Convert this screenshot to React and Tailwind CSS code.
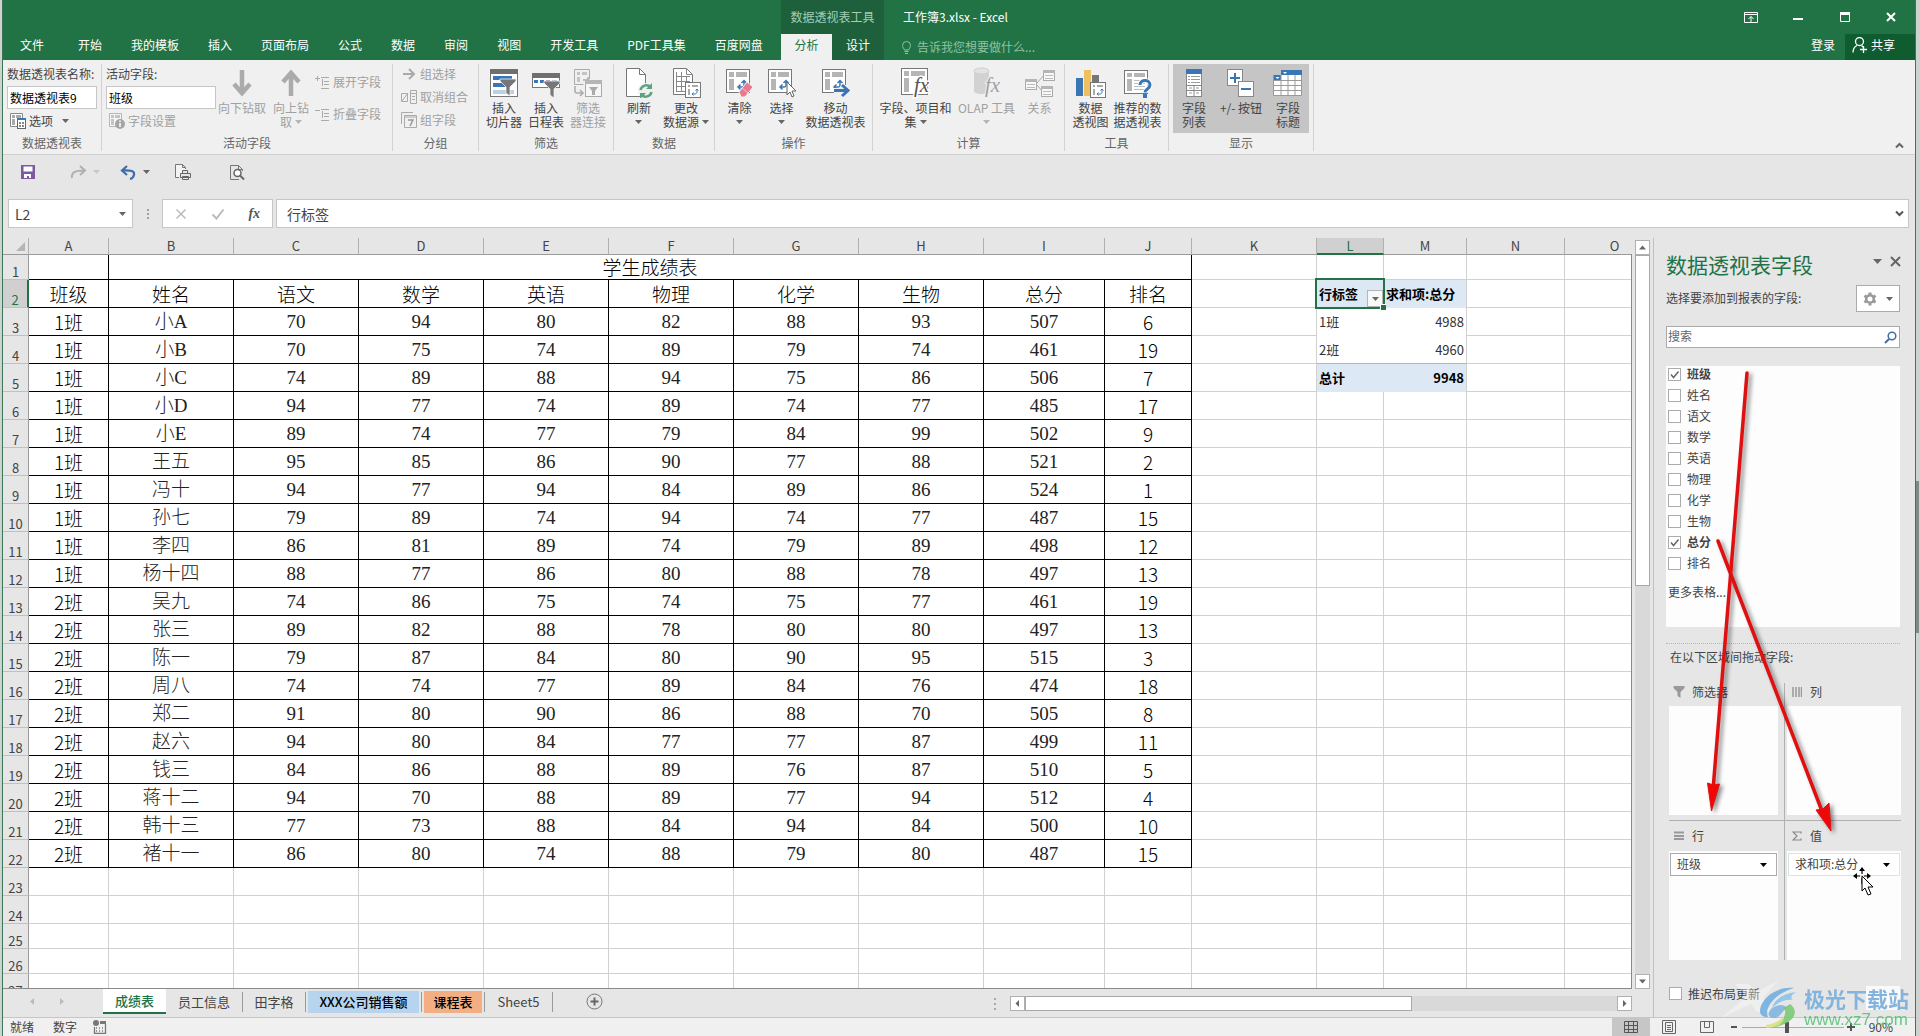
const tabs = ['开始', '我的模板', '插入', '页面布局', '公式', '数据', '审阅', '视图', '开发工具', 'PDF工具集', '百度网盘']

const headers = ['班级', '姓名', '语文', '数学', '英语', '物理', '化学', '生物', '总分', '排名']

const students = [
  ['1班', '小A', 70, 94, 80, 82, 88, 93, 507, 6],
  ['1班', '小B', 70, 75, 74, 89, 79, 74, 461, 19],
  ['1班', '小C', 74, 89, 88, 94, 75, 86, 506, 7],
  ['1班', '小D', 94, 77, 74, 89, 74, 77, 485, 17],
  ['1班', '小E', 89, 74, 77, 79, 84, 99, 502, 9],
  ['1班', '王五', 95, 85, 86, 90, 77, 88, 521, 2],
  ['1班', '冯十', 94, 77, 94, 84, 89, 86, 524, 1],
  ['1班', '孙七', 79, 89, 74, 94, 74, 77, 487, 15],
  ['1班', '李四', 86, 81, 89, 74, 79, 89, 498, 12],
  ['1班', '杨十四', 88, 77, 86, 80, 88, 78, 497, 13],
  ['2班', '吴九', 74, 86, 75, 74, 75, 77, 461, 19],
  ['2班', '张三', 89, 82, 88, 78, 80, 80, 497, 13],
  ['2班', '陈一', 79, 87, 84, 80, 90, 95, 515, 3],
  ['2班', '周八', 74, 74, 77, 89, 84, 76, 474, 18],
  ['2班', '郑二', 91, 80, 90, 86, 88, 70, 505, 8],
  ['2班', '赵六', 94, 80, 84, 77, 77, 87, 499, 11],
  ['2班', '钱三', 84, 86, 88, 89, 76, 87, 510, 5],
  ['2班', '蒋十二', 94, 70, 88, 89, 77, 94, 512, 4],
  ['2班', '韩十三', 77, 73, 88, 84, 94, 84, 500, 10],
  ['2班', '褚十一', 86, 80, 74, 88, 79, 80, 487, 15],
]

const columns = [
  ['A', 'w-[80px]'], ['B', 'w-[125px]'], ['C', 'w-[125px]'], ['D', 'w-[125px]'], ['E', 'w-[125px]'],
  ['F', 'w-[125px]'], ['G', 'w-[125px]'], ['H', 'w-[125px]'], ['I', 'w-[121px]'], ['J', 'w-[87px]'],
  ['K', 'w-[125px]'], ['L', 'w-[67px]'], ['M', 'w-[83px]'], ['N', 'w-[98px]'], ['O', 'w-[100px]'],
]

const fields = [
  ['班级', true], ['姓名', false], ['语文', false], ['数学', false], ['英语', false],
  ['物理', false], ['化学', false], ['生物', false], ['总分', true], ['排名', false],
]

function Caret({ className = 'text-[#666]' }) {
  return (
    <svg width="7" height="4" viewBox="0 0 7 4" className={`shrink-0 ${className}`} aria-hidden="true">
      <path d="M0 0h7L3.500 4z" fill="currentColor" />
    </svg>
  )
}

/* ---------- ribbon icons ---------- */

function Svg({ size = 30, box = 30, children }) {
  return (
    <svg width={size} height={size} viewBox={`0 0 ${box} ${box}`} fill="none" aria-hidden="true" className="shrink-0">
      {children}
    </svg>
  )
}

function PivotSheet({ x = 1, y = 1 }) {
  return (
    <g transform={`translate(${x} ${y})`}>
      <rect x="0.500" y="0.500" width="23" height="23" fill="#fff" stroke="#777" />
      <rect x="3" y="3" width="5" height="5" fill="#b5b5b5" />
      <rect x="10" y="3" width="11" height="5" fill="#b5b5b5" />
      <rect x="3" y="10" width="5" height="11" fill="#b5b5b5" />
      <path d="M12 18h4c2 0 2-1 2-3v-3M14.500 15.500L12 18l2.500 2.500M15.500 14L18 11.500l2.500 2.500" stroke="#3a76b5" strokeWidth="1.500" />
    </g>
  )
}

function PivotBadge({ x, y }) {
  return (
    <g transform={`translate(${x} ${y})`}>
      <rect x="0.500" y="0.500" width="15" height="15" fill="#fff" stroke="#777" />
      <path d="M3 3h2v2H3zM7 3h6v2H7zM3 7h2v6H3z" fill="#aaa" />
      <path d="M7 12h3c1 0 2-1 2-2V7M8.500 10.500L7 12l1.500 1.500M10.500 8.500L12 7l1.500 1.500" stroke="#3a76b5" />
    </g>
  )
}

const Funnel = ({ x, y, color = '#777' }) => (
  <path transform={`translate(${x} ${y})`} d="M0 0h16v2l-6 6v9l-4-3V8L0 2z" fill={color} stroke="#f0f0f0" strokeWidth="0.800" />
)

const SlicerIcon = () => (
  <Svg>
    <rect x="1.500" y="1.500" width="27" height="27" fill="#fff" stroke="#777" />
    <rect x="1" y="1" width="28" height="5" fill="#6f6f6f" />
    <rect x="4" y="8" width="19" height="4" fill="#3a76b5" />
    <rect x="4" y="15" width="13" height="4" fill="#3a76b5" />
    <rect x="4" y="22" width="21" height="4" fill="#bcd0e5" />
    <Funnel x="11" y="11" />
  </Svg>
)

const TimelineIcon = () => (
  <Svg>
    <rect x="1.500" y="5.500" width="27" height="14" fill="#fff" stroke="#777" />
    <rect x="1" y="5" width="28" height="5" fill="#6f6f6f" />
    <path d="M3 12h4v3H3zM9 12h4v3H9z" fill="#3a76b5" />
    <path d="M15 12h4v3h-4z" fill="#a8708e" />
    <path d="M21 12h5v3h-5z" fill="#9ab8d8" />
    <Funnel x="13" y="13" />
  </Svg>
)

const FilterLinkIcon = () => (
  <Svg>
    <path d="M1.500 1.500h15v10M1.500 1.500v15h9" stroke="#aaa" />
    <path d="M4 4h3v3H4zM9 4h5v3H9zM4 9h3v5H4z" fill="#c4c4c4" />
    <path d="M10 12h5V9M2 18v5q0 2 2 2h6M7 22l3 3-3 3" stroke="#aaa" strokeWidth="1.500" />
    <rect x="12.500" y="12.500" width="16" height="16" fill="#f6f6f6" stroke="#aaa" />
    <rect x="12" y="12" width="17" height="4" fill="#b5b5b5" />
    <path d="M16 19h9l-3 4v4h-3v-4z" fill="#aaa" />
  </Svg>
)

const RefreshIcon = () => (
  <Svg>
    <path d="M2.500 0.500h13l6 6v22h-19z" fill="#fff" stroke="#777" />
    <path d="M15.500 0.500v6h6" stroke="#777" />
    <circle cx="22" cy="23" r="8" fill="#f0f0f0" />
    <path d="M16.500 22a6 6 0 0 1 10-3M27.500 24a6 6 0 0 1-10 3" stroke="#5aa37f" strokeWidth="2.500" />
    <path d="M28 15v6h-6zM16 31v-6h6z" fill="#5aa37f" />
  </Svg>
)

const ChangeSourceIcon = () => (
  <Svg>
    <path d="M2.500 0.500h13l6 6v20h-19z" fill="#fff" stroke="#777" />
    <path d="M15.500 0.500v6h6M5 8.500h14M5 13.500h14M5 18.500h14M5 23.500h14M5.500 4v20M10.500 4v20M15.500 8v16" stroke="#888" />
    <PivotBadge x="14" y="14" />
  </Svg>
)

const ClearIcon = () => (
  <Svg>
    <PivotSheet x="1" y="1" />
    <path d="M14 24L22 14l6 5-8 10h-4z" fill="#e8798f" stroke="#f0f0f0" />
    <path d="M17 20l6 5" stroke="#f7c3cd" />
  </Svg>
)

const SelectIcon = () => (
  <Svg>
    <PivotSheet x="1" y="1" />
    <path d="M20 14v13l3-3 2 5 2-1-2-5h4z" fill="#fff" stroke="#666" />
  </Svg>
)

const MoveIcon = () => (
  <Svg>
    <PivotSheet x="1" y="1" />
    <path d="M13 22.500h14M21 17l6 5.500-6 5.500" stroke="#f0f0f0" strokeWidth="5" />
    <path d="M13 22.500h14M21 17l6 5.500-6 5.500" stroke="#3a76b5" strokeWidth="3" />
  </Svg>
)

const FieldItemsIcon = () => (
  <Svg size={32} box={32}>
    <rect x="1.500" y="1.500" width="26" height="26" fill="#fff" stroke="#777" />
    <path d="M4 4h5v5H4zM11 4h14v5H11zM4 11h5v14H4z" fill="#b5b5b5" />
    <text x="14" y="25" fontSize="21" fontStyle="italic" fontFamily="Liberation Serif, serif" fill="#555" stroke="#fff" strokeWidth="3" paintOrder="stroke">fx</text>
  </Svg>
)

const OlapIcon = () => (
  <Svg size={32} box={32}>
    <path d="M3 4v20c0 4 15 4 15 0V4z" fill="#d2d2d2" />
    <ellipse cx="10.500" cy="4" rx="7.500" ry="3" fill="#e3e3e3" stroke="#cfcfcf" />
    <text x="14" y="25" fontSize="21" fontStyle="italic" fontFamily="Liberation Serif, serif" fill="#a0a0a0" stroke="#f0f0f0" strokeWidth="2" paintOrder="stroke">fx</text>
  </Svg>
)

const RelationIcon = () => (
  <Svg>
    <path d="M12 15l7-8M12 17l6 7" stroke="#aaa" />
    {[[0, 11], [18, 2], [16, 18]].map(([x, y]) => (
      <g key={x} transform={`translate(${x} ${y})`}>
        <rect x="0.500" y="0.500" width="11" height="10" fill="#f8f8f8" stroke="#aaa" />
        <path d="M0 0h12v3H0z" fill="#b5b5b5" />
        <path d="M2 5.500h8M2 8.500h8" stroke="#bbb" />
      </g>
    ))}
  </Svg>
)

const ChartIcon = () => (
  <Svg>
    <rect x="0" y="10" width="7" height="18" fill="#3a76b5" />
    <rect x="8" y="2" width="7" height="26" fill="#f0bf62" />
    <rect x="16" y="7" width="7" height="10" fill="#777" />
    <PivotBadge x="14" y="14" />
  </Svg>
)

const RecommendIcon = () => (
  <Svg>
    <rect x="1.500" y="2.500" width="23" height="23" fill="#fff" stroke="#777" />
    <path d="M4 5h5v4H4zM11 5h11v4H11zM4 11h5v12H4z" fill="#b5b5b5" />
    <path d="M11 12.500h11M11 15.500h11M11 18.500h11M11 21.500h11" stroke="#bbb" />
    <path d="M17 17c0-6 10-6 10 0 0 4-5 4-5 8" stroke="#fff" strokeWidth="5" />
    <path d="M17 17c0-6 10-6 10 0 0 4-5 4-5 7.500" stroke="#3a76b5" strokeWidth="3" />
    <rect x="20" y="26" width="4" height="4" fill="#3a76b5" />
  </Svg>
)

const FieldListIcon = () => (
  <Svg>
    <rect x="7.500" y="1.500" width="15" height="27" fill="#fff" stroke="#888" />
    <rect x="7" y="1" width="16" height="5" fill="#3a76b5" />
    <path d="M9 8.500h2M12 8.500h9M9 11.500h2M12 11.500h9M9 14.500h2M12 14.500h9" stroke="#999" />
    <path d="M8 17.500h14M8 22.500h14M15 17v11" stroke="#888" />
    <path d="M10 20h3M17 20h3M10 25h3M17 25h3" stroke="#999" />
  </Svg>
)

const PlusMinusIcon = () => (
  <Svg>
    <rect x="1.500" y="1.500" width="15" height="16" fill="#fff" stroke="#888" />
    <path d="M9 5v10M4 10h10" stroke="#3a76b5" strokeWidth="2" />
    <rect x="12.500" y="13.500" width="15" height="15" fill="#fff" stroke="#888" />
    <path d="M15 21h10" stroke="#3a76b5" strokeWidth="2" />
  </Svg>
)

const FieldHeaderIcon = () => (
  <Svg>
    <path d="M8 2h21v5H8zM1 7h7v5H1z" fill="#3a76b5" />
    <path d="M8 7h21v20H1V12h7z" fill="#fff" />
    <path d="M0.500 7v20.500h28V7M1 12.500h28M1 17.500h28M1 22.500h28M8 7v20M15 7v20M22 7v20" stroke="#999" />
    <path d="M10 4h4l-2 2zM2.500 9h4l-2 2z" fill="#fff" />
  </Svg>
)

const DrillIcon = ({ up }) => (
  <Svg>
    <path d={up ? 'M15 28V5M7 14L15 5l8 9' : 'M15 2v23M7 16l8 9 8-9'} stroke="#ababab" strokeWidth="4.500" />
  </Svg>
)

const TreeIcon = ({ plus }) => (
  <Svg size={15} box={15}>
    <path d="M0 3.500h5" stroke="#aaa" />
    {plus && <path d="M2.500 1v5" stroke="#aaa" />}
    <path d="M6 2.500h8M9 6.500h5M9 9.500h5M6 13.500h8M7.500 4v7" stroke="#aaa" />
  </Svg>
)

const OptionsIcon = () => (
  <Svg size={16} box={16}>
    <path d="M0.500 0.500h12v13H0.500z" fill="#fff" stroke="#888" />
    <path d="M2 2h3v3H2zM6 2h5v3H6zM2 6h3v6H2z" fill="#aaa" />
    <rect x="7.500" y="5.500" width="8" height="10" fill="#fff" stroke="#666" />
    <path d="M7 5h9v2H7z" fill="#3a76b5" />
    <path d="M9 9h2v2H9zM12 9h2v2h-2zM9 12h2v2H9zM12 12h2v2h-2z" fill="#888" />
  </Svg>
)

const FieldSettingsIcon = () => (
  <Svg size={16} box={16}>
    <path d="M0.500 0.500h12v13H0.500z" fill="#f6f6f6" stroke="#b5b5b5" />
    <path d="M2 2h3v3H2zM6 2h5v3H6zM2 6h3v6H2z" fill="#c4c4c4" />
    <circle cx="11" cy="11" r="5" fill="#a5a5a5" />
    <path d="M11 7.500v1.500M11 10v4" stroke="#fff" strokeWidth="1.500" />
  </Svg>
)

/* ---------- ribbon ---------- */

function BigButton({ icon, lines, width, disabled, menu }) {
  const last = lines.length - 1
  return (
    <button disabled={disabled} className={`flex shrink-0 flex-col items-center gap-[2px] pt-[3px] leading-[14px] ${width} ${disabled ? 'text-[#a0a0a0]' : 'text-[#444]'}`}>
      <span className="flex h-8 items-center">{icon}</span>
      <span className="flex flex-col items-center">
        {lines.map((line, i) => (
          <span key={line} className="flex h-[14px] items-center gap-[3px] whitespace-nowrap">
            {line}
            {menu === 'inline' && i === last && <Caret className={disabled ? 'text-[#b5b5b5]' : 'text-[#666]'} />}
          </span>
        ))}
        {menu === 'below' && (
          <span className="flex h-[14px] items-center"><Caret className={disabled ? 'text-[#b5b5b5]' : 'text-[#666]'} /></span>
        )}
      </span>
    </button>
  )
}

function Group({ label, width, children }) {
  return (
    <section className={`mt-1 flex h-[87px] shrink-0 flex-col border-r border-[#d2d2d2] ${width}`}>
      <div className="flex flex-1 justify-center">{children}</div>
      <div className="pb-[1px] text-center leading-[14px] text-[#666]">{label}</div>
    </section>
  )
}

function SmallButton({ icon, children, disabled, menu }) {
  return (
    <button disabled={disabled} className={`flex h-5 items-center gap-[3px] whitespace-nowrap ${disabled ? 'text-[#a0a0a0]' : 'text-[#444]'}`}>
      {icon}
      {children}
      {menu && <span className="pl-[6px]"><Caret /></span>}
    </button>
  )
}

function Ribbon() {
  return (
    <div className="flex h-[95px] overflow-hidden border-b border-[#d0d0d0] bg-[#f0f0f0] text-xs">
      <Group label="数据透视表" width="w-[99px]">
        <div className="flex flex-1 flex-col px-1 text-[#444]">
          <label htmlFor="pivot-name" className="h-[22px] whitespace-nowrap leading-[20px]">数据透视表名称:</label>
          <input id="pivot-name" defaultValue="数据透视表9" className="h-[23px] w-full border border-[#c6c6c6] bg-white px-[2px] text-black" />
          <div className="mt-[2px] pl-[3px]"><SmallButton icon={<OptionsIcon />} menu>选项</SmallButton></div>
        </div>
      </Group>
      <Group label="活动字段" width="w-[291px]">
        <div className="flex w-[114px] shrink-0 flex-col pl-1 text-[#444]">
          <label htmlFor="active-field" className="h-[22px] leading-[20px]">活动字段:</label>
          <input id="active-field" defaultValue="班级" className="h-[23px] w-full border border-[#c6c6c6] bg-white px-[2px] text-black" />
          <div className="mt-[2px] pl-[3px]"><SmallButton icon={<FieldSettingsIcon />} disabled>字段设置</SmallButton></div>
        </div>
        <BigButton icon={<DrillIcon />} lines={['向下钻取']} width="w-[52px]" disabled />
        <BigButton icon={<DrillIcon up />} lines={['向上钻', '取']} width="w-[46px]" disabled menu="inline" />
        <div className="flex flex-1 flex-col gap-3 pl-px pt-2">
          <SmallButton icon={<TreeIcon plus />} disabled>展开字段</SmallButton>
          <SmallButton icon={<TreeIcon />} disabled>折叠字段</SmallButton>
        </div>
      </Group>
      <Group label="分组" width="w-[86px]">
        <div className="flex flex-1 flex-col gap-[3px] pl-2">
          <SmallButton disabled icon={<Svg size={16} box={16}><path d="M2 8h10M8 3l5 5-5 5" stroke="#aaa" strokeWidth="2" /></Svg>}>组选择</SmallButton>
          <SmallButton disabled icon={<Svg size={16} box={16}><path d="M0.500 4.500h6v8h-6zM1 12l6-8M9.500 1.500h6v13h-6zM9 4.500h7M11 7.500h3M11 10.500h3" stroke="#aaa" /></Svg>}>取消组合</SmallButton>
          <SmallButton disabled icon={<Svg size={16} box={16}><path d="M0.500 12V0.500H12M3.500 3.500h12v12h-12zM3 5h13" stroke="#aaa" /><path d="M7 8h5l-3 6" stroke="#999" strokeWidth="1.500" /></Svg>}>组字段</SmallButton>
        </div>
      </Group>
      <Group label="筛选" width="w-[135px]">
        <BigButton icon={<SlicerIcon />} lines={['插入', '切片器']} width="w-[42px]" />
        <BigButton icon={<TimelineIcon />} lines={['插入', '日程表']} width="w-[42px]" />
        <BigButton icon={<FilterLinkIcon />} lines={['筛选', '器连接']} width="w-[42px]" disabled />
      </Group>
      <Group label="数据" width="w-[101px]">
        <BigButton icon={<RefreshIcon />} lines={['刷新']} width="w-[44px]" menu="below" />
        <BigButton icon={<ChangeSourceIcon />} lines={['更改', '数据源']} width="w-[50px]" menu="inline" />
      </Group>
      <Group label="操作" width="w-[158px]">
        <BigButton icon={<ClearIcon />} lines={['清除']} width="w-[42px]" menu="below" />
        <BigButton icon={<SelectIcon />} lines={['选择']} width="w-[42px]" menu="below" />
        <BigButton icon={<MoveIcon />} lines={['移动', '数据透视表']} width="w-[66px]" />
      </Group>
      <Group label="计算" width="w-[192px]">
        <BigButton icon={<FieldItemsIcon />} lines={['字段、项目和', '集']} width="w-[78px]" menu="inline" />
        <BigButton icon={<OlapIcon />} lines={['OLAP 工具']} width="w-[64px]" disabled menu="below" />
        <BigButton icon={<RelationIcon />} lines={['关系']} width="w-[42px]" disabled />
      </Group>
      <Group label="工具" width="w-[104px]">
        <BigButton icon={<ChartIcon />} lines={['数据', '透视图']} width="w-[42px]" />
        <BigButton icon={<RecommendIcon />} lines={['推荐的数', '据透视表']} width="w-[52px]" />
      </Group>
      <Group label="显示" width="w-[145px]">
        <div className="flex h-[69px] bg-[#c5c5c5]">
          <BigButton icon={<FieldListIcon />} lines={['字段', '列表']} width="w-[42px]" />
          <BigButton icon={<PlusMinusIcon />} lines={['+/- 按钮']} width="w-[52px]" />
          <BigButton icon={<FieldHeaderIcon />} lines={['字段', '标题']} width="w-[42px]" />
        </div>
      </Group>
      <button aria-label="折叠功能区" className="mb-1 ml-auto mr-[11px] self-end">
        <Svg size={9} box={9}><path d="M1 6.500L4.500 3 8 6.500" stroke="#666" strokeWidth="2" /></Svg>
      </button>
    </div>
  )
}

function TitleBar() {
  return (
    <header className="flex h-[60px] bg-[#217346] text-xs text-white">
      <nav className="flex w-[778px] shrink-0 items-end whitespace-nowrap">
        <button className="mr-5 h-[26px] pb-1 pl-[17px]">文件</button>
        {tabs.map((tab) => (
          <button key={tab} className="mr-px h-[26px] px-[14px] pb-1">{tab}</button>
        ))}
      </nav>
      <div className="flex w-[103px] shrink-0 flex-col bg-[#1e603b]">
        <div className="flex h-[34px] items-center justify-center whitespace-nowrap text-[#a5cdb4]">数据透视表工具</div>
        <div className="flex h-[26px]">
          <button className="w-[51px] bg-[#f0f0f0] pb-1 text-[#217346]">分析</button>
          <button className="flex-1 pb-1">设计</button>
        </div>
      </div>
      <div className="flex min-w-0 flex-1 flex-col">
        <div className="flex h-[34px] items-center pl-[19px] pr-[18px]">
          <h1 className="whitespace-nowrap">工作簿3.xlsx - Excel</h1>
          <div className="ml-auto flex items-center gap-[33px]">
            <button aria-label="功能区显示选项"><Svg size={14} box={14}><path d="M0.500 2.500h13v10H0.500zM0 4.500h14M7 12V6.500M4.500 9L7 6.500 9.500 9" stroke="#fff" /></Svg></button>
            <button aria-label="最小化"><Svg size={14} box={14}><path d="M2 9h10" stroke="#fff" strokeWidth="2" /></Svg></button>
            <button aria-label="最大化"><Svg size={14} box={14}><path d="M2.500 2.500h9v9h-9z" stroke="#fff" /><path d="M2 2h10v3H2z" fill="#fff" /></Svg></button>
            <button aria-label="关闭"><Svg size={12} box={12}><path d="M2 2l8 8M10 2l-8 8" stroke="#fff" strokeWidth="2" /></Svg></button>
          </div>
        </div>
        <div className="flex h-[26px] items-center">
          <div className="flex items-center gap-1 pl-4 text-[#8fc2a4]">
            <Svg size={13} box={13}><path d="M4.500 9C4 7.500 2.500 6.500 2.500 4.500a4 4 0 0 1 8 0C10.500 6.500 9 7.500 8.500 9zM4.500 10.500h4M5 12.500h3" stroke="#8fc2a4" /></Svg>
            <input aria-label="操作说明搜索" placeholder="告诉我您想要做什么..." className="w-40 bg-transparent placeholder:text-[#8fc2a4]" />
          </div>
          <button className="ml-auto pb-1">登录</button>
          <button className="ml-[10px] flex h-[26px] w-[70px] items-center gap-[3px] bg-[#0e5c2f] pb-1 pl-[7px]">
            <Svg size={16} box={16}><circle cx="7.500" cy="4.500" r="4" stroke="#fff" strokeWidth="1.300" /><path d="M1 15.500c0-4 2-6 4-7M9.500 8.500l2 2M8 12.500h7M11.500 9v7" stroke="#fff" strokeWidth="1.300" /></Svg>
            共享
          </button>
        </div>
      </div>
    </header>
  )
}

function QuickBar() {
  return (
    <div className="flex h-[34px] items-center pl-[17px]">
      <button aria-label="保存">
        <Svg size={16} box={16}><path d="M1 1h14v14H1z" fill="#7d5a9e" /><path d="M3.500 2.500h9v5h-9zM4 10h7v4h-2v-2H7v2H4z" fill="#fff" /></Svg>
      </button>
      <button aria-label="恢复" className="ml-[34px] flex items-center gap-[6px]">
        <Svg size={17} box={17}><path d="M2 14C1 8 6 6 15 6.500M10 2l5 4.500-5 4.500" stroke="#b0b0b0" strokeWidth="2" /></Svg>
        <Caret className="text-[#c8c8c8]" />
      </button>
      <button aria-label="撤消" className="ml-5 flex items-center gap-[6px]">
        <Svg size={17} box={17}><path d="M2 6.500C11 6 15 7 14 11c-.5 2-2 3.500-4 4M7 2L2 6.500 7 11" stroke="#416ea8" strokeWidth="2.200" /></Svg>
        <Caret />
      </button>
      <button aria-label="快速打印" className="ml-6">
        <Svg size={18} box={18}><path d="M5 14.500H1.500v-13h7l3 3V6M8.500 1.500v3h3" stroke="#777" fill="#f4f4f4" /><path d="M8.500 10.500v-3h5v3M6.500 10.500h10v4h-10zM8.500 13.500h6v3h-6z" fill="#e6e6e6" stroke="#666" /></Svg>
      </button>
      <button aria-label="打印预览" className="ml-[37px]">
        <Svg size={17} box={17}><path d="M10 15.500H1.500v-14h8l4 4V7M9.500 1.500v4h4" stroke="#777" /><circle cx="8.500" cy="9" r="3.500" fill="#fff" stroke="#666" strokeWidth="1.500" /><path d="M11 11.500l4 4" stroke="#666" strokeWidth="2" /></Svg>
      </button>
    </div>
  )
}

function FormulaBar() {
  return (
    <div className="mb-[7px] mt-[10px] flex h-[29px] gap-[3px] pl-[5px] pr-[6px] text-sm text-[#444]">
      <div className="flex w-[125px] items-center border border-[#c6c6c6] bg-white pr-[6px]">
        <input aria-label="名称框" defaultValue="L2" className="min-w-0 flex-1 pl-[6px]" />
        <button aria-label="名称列表"><Caret /></button>
      </div>
      <div className="flex w-[23px] flex-col items-center justify-center gap-[2px]">
        <span className="size-[2px] bg-[#a0a0a0]" />
        <span className="size-[2px] bg-[#a0a0a0]" />
        <span className="size-[2px] bg-[#a0a0a0]" />
      </div>
      <div className="flex w-[111px] items-center justify-around border border-[#c6c6c6] bg-white">
        <button aria-label="取消"><Svg size={12} box={12}><path d="M1.500 1.500l9 9M10.500 1.500l-9 9" stroke="#bbb" strokeWidth="1.500" /></Svg></button>
        <button aria-label="输入"><Svg size={14} box={14}><path d="M1.500 7.500l4 4 7-9" stroke="#bbb" strokeWidth="2" /></Svg></button>
        <button className="font-['Liberation_Serif',serif] text-sm font-bold italic leading-4 text-[#555]">fx</button>
      </div>
      <div className="flex flex-1 items-center border border-[#c6c6c6] bg-white pr-1">
        <input aria-label="编辑栏" defaultValue="行标签" className="min-w-0 flex-1 pl-[10px]" />
        <button aria-label="展开编辑栏"><Svg size={9} box={9}><path d="M1 2.500L4.500 6 8 2.500" stroke="#555" strokeWidth="2" /></Svg></button>
      </div>
    </div>
  )
}

/* ---------- worksheet ---------- */

const line = 'border-b border-r border-[#d0d0d0]'

function RowHead({ n, active }) {
  return (
    <th scope="row" className={`border-b border-b-[#c0c0c0] p-0 align-bottom text-[13px] font-normal leading-[15px] ${active ? 'border-r-2 border-r-[#217346] bg-[#d0d0d0] text-[#217346]' : 'border-r border-r-[#9a9a9a] bg-[#e6e6e6] text-[#444]'}`}>{n}</th>
  )
}

function Blank({ count }) {
  return Array.from({ length: count }, (_, i) => <td key={i} className={line} />)
}

// K to O for each row: the pivot table lives in L2:M5
function RightCells({ row }) {
  if (row === 2) {
    return (
      <>
        <td className={line} />
        <td className="relative bg-[#dce9f5] p-0 text-[13px] font-bold">
          <div className="pl-[2px] leading-[18px]">行标签</div>
          <button aria-label="筛选行标签" className="absolute bottom-px right-px flex h-[17px] w-4 items-center justify-center border border-[#b5b5b5] bg-[#f8f8f8]"><Caret /></button>
          <div className="pointer-events-none absolute -bottom-px -left-[2px] -right-px -top-[2px] border-2 border-[#217346]" />
          <div className="absolute -bottom-[2px] -right-[2px] size-[6px] border-l border-t border-white bg-[#217346]" />
        </td>
        <td className="whitespace-nowrap border-r border-[#d0d0d0] bg-[#dce9f5] p-0 pl-[2px] text-[13px] font-bold leading-[18px]">求和项:总分</td>
        <Blank count={2} />
      </>
    )
  }
  if (row === 3 || row === 4) {
    const [name, sum] = row === 3 ? ['1班', 4988] : ['2班', 4960]
    const edge = row === 4 ? 'border-b border-b-[#9fbbd6]' : ''
    return (
      <>
        <td className={line} />
        <td className={`p-0 pl-[2px] text-[13px] leading-[18px] text-[#333] ${edge}`}>{name}</td>
        <td className={`border-r border-r-[#d0d0d0] p-0 pr-[2px] text-right text-[13px] leading-[18px] text-[#333] ${edge}`}>{sum}</td>
        <Blank count={2} />
      </>
    )
  }
  if (row === 5) {
    return (
      <>
        <td className={line} />
        <td className="bg-[#dce9f5] p-0 pl-[2px] text-[13px] font-bold leading-[18px]">总计</td>
        <td className="border-r border-[#d0d0d0] bg-[#dce9f5] p-0 pr-[2px] text-right text-[13px] font-bold leading-[18px]">9948</td>
        <Blank count={2} />
      </>
    )
  }
  return <Blank count={5} />
}

const black = 'border-b border-r border-black p-0 text-center text-[19px] leading-[24px]'

function Sheet() {
  return (
    <div className="min-h-0 min-w-0 flex-1 overflow-hidden border-b border-[#8a8a8a] pt-[3px]">
      <table className="w-full min-w-[1662px] table-fixed border-separate border-spacing-0 text-black">
        <colgroup>
          <col className="w-[26px]" />
          {columns.map(([name, width]) => <col key={name} className={width} />)}
        </colgroup>
        <thead>
          <tr className="h-[17px] text-[13px] leading-4 text-[#444]">
            <th className="border-b border-r border-b-[#9a9a9a] border-r-[#b0b0b0] p-0">
              <svg width="9" height="9" viewBox="0 0 9 9" className="ml-auto mr-[3px]" aria-hidden="true"><path d="M9 0v9H0z" fill="#b5b5b5" /></svg>
            </th>
            {columns.map(([name]) => (
              <th key={name} scope="col" className={`border-r border-r-[#b0b0b0] p-0 font-normal ${name === 'L' ? 'border-b-2 border-b-[#217346] bg-[#d0d0d0] leading-[15px] text-[#217346]' : 'border-b border-b-[#9a9a9a]'}`}>{name}</th>
            ))}
          </tr>
        </thead>
        <tbody className="bg-white">
          <tr className="h-[25px]">
            <RowHead n={1} />
            <td className="border-b border-r border-black" />
            <td colSpan={9} className={`${black} font-light`}>学生成绩表</td>
            <RightCells row={1} />
          </tr>
          <tr className="h-7">
            <RowHead n={2} active />
            {headers.map((h) => <td key={h} className={`${black} font-light`}>{h}</td>)}
            <RightCells row={2} />
          </tr>
          {students.map((student, i) => (
            <tr key={student[1]} className="h-7">
              <RowHead n={i + 3} />
              {student.map((value, c) => (
                <td key={c} className={`${black} font-light ${c === 0 || c === 9 ? '' : "font-['Liberation_Serif','Noto_Sans_CJK_SC',serif] text-[#222]"}`}>{value}</td>
              ))}
              <RightCells row={i + 3} />
            </tr>
          ))}
          {[23, 24, 25, 26, 27].map((n) => (
            <tr key={n} className={n < 25 ? 'h-7' : 'h-[25px]'}>
              <RowHead n={n} />
              <Blank count={15} />
            </tr>
          ))}
        </tbody>
      </table>
    </div>
  )
}

function ScrollArrow({ label, d, className = '' }) {
  return (
    <button aria-label={label} className={`flex size-[15px] shrink-0 items-center justify-center border border-[#b0b0b0] bg-white ${className}`}>
      <svg width="7" height="7" viewBox="0 0 7 7" aria-hidden="true"><path d={d} fill="#666" /></svg>
    </button>
  )
}

function VerticalScroll() {
  return (
    <div className="mx-[3px] mt-[5px] flex w-[15px] shrink-0 flex-col bg-[#d9d9d9]">
      <ScrollArrow label="向上滚动" d="M0 5.500h7L3.500 1.500z" />
      <div className="h-[331px] border border-[#a8a8a8] bg-white" />
      <ScrollArrow label="向下滚动" d="M0 1.500h7L3.500 5.500z" className="mt-auto" />
    </div>
  )
}

const Divider = () => <span className="h-5 w-px bg-[#9a9a9a]" />

function SheetTabs() {
  return (
    <div className="flex h-7 shrink-0 items-start text-[13px] text-[#444]">
      <div className="flex h-[25px] w-[100px] items-center gap-[22px] pl-[26px]">
        <Svg size={7} box={7}><path d="M5 0v7L1 3.500z" fill="#bbb" /></Svg>
        <Svg size={7} box={7}><path d="M2 0v7l4-3.500z" fill="#bbb" /></Svg>
      </div>
      <button className="h-[25px] w-[63px] border-b-2 border-[#217346] bg-white font-medium text-[#217346]">成绩表</button>
      <div className="flex h-[25px] items-center whitespace-nowrap">
        <button className="w-[76px]">员工信息</button>
        <Divider />
        <button className="w-[62px]">田字格</button>
        <Divider />
        <button className="mx-[2px] h-[22px] w-[111px] bg-[#b7d4ee] font-medium text-black">XXX公司销售额</button>
        <Divider />
        <button className="mx-[2px] h-[22px] w-[58px] bg-[#f4ae84] font-medium text-black">课程表</button>
        <Divider />
        <button className="w-[67px]">Sheet5</button>
        <Divider />
        <button aria-label="新工作表" className="ml-[33px]">
          <Svg size={17} box={17}><circle cx="8.500" cy="8.500" r="7.500" stroke="#777" /><path d="M8.500 4.500v8M4.500 8.500h8" stroke="#666" strokeWidth="2" /></Svg>
        </button>
      </div>
      <div className="ml-auto mr-[21px] flex h-[29px] w-[638px] items-center">
        <div className="flex w-4 flex-col gap-[3px]">
          <span className="size-[2px] bg-[#a8a8a8]" />
          <span className="size-[2px] bg-[#a8a8a8]" />
          <span className="size-[2px] bg-[#a8a8a8]" />
        </div>
        <div className="flex flex-1 bg-[#d9d9d9]">
          <ScrollArrow label="向左滚动" d="M5 0v7L1.500 3.500z" />
          <div className="w-[387px] border border-[#a8a8a8] bg-white" />
          <ScrollArrow label="向右滚动" d="M2 0v7l3.500-3.500z" className="ml-auto" />
        </div>
      </div>
    </div>
  )
}

/* ---------- field pane ---------- */

function Check({ id, checked }) {
  return (
    <span className="grid size-[13px] shrink-0">
      <input id={id} type="checkbox" defaultChecked={checked} className="peer col-start-1 row-start-1 size-[13px] appearance-none border border-[#ababab] bg-white" />
      <svg viewBox="0 0 13 13" fill="none" className="pointer-events-none invisible col-start-1 row-start-1 size-[13px] peer-checked:visible" aria-hidden="true">
        <path d="M3 6.500L5.500 9.500 10.500 3.500" stroke="#666" strokeWidth="1.500" />
      </svg>
    </span>
  )
}

function AreaSelect({ label, value, className }) {
  return (
    <div className="mx-px mt-[2px] grid items-center">
      <select aria-label={label} className={`col-start-1 row-start-1 h-[23px] w-full appearance-none border bg-white pb-px pl-[6px] text-xs text-[#444] ${className}`}>
        <option>{value}</option>
      </select>
      <span className="pointer-events-none col-start-1 row-start-1 mr-[10px] justify-self-end"><Caret className="text-black" /></span>
    </div>
  )
}

function FieldPane() {
  return (
    <aside className="relative mt-[3px] flex w-[262px] shrink-0 flex-col border-l border-[#c0c0c0] pl-3 pr-[15px] pt-[13px] text-xs text-[#444]">
      <div className="flex h-7 shrink-0 items-center">
        <h2 className="mb-[3px] whitespace-nowrap text-[21px] leading-7 text-[#217346]">数据透视表字段</h2>
        <button aria-label="任务窗格选项" className="mb-2 ml-auto"><svg width="9" height="5" viewBox="0 0 9 5" aria-hidden="true"><path d="M0 0h9L4.500 5z" fill="#666" /></svg></button>
        <button aria-label="关闭窗格" className="-mr-px mb-2 ml-2"><Svg size={11} box={11}><path d="M1 1l9 9M10 1l-9 9" stroke="#666" strokeWidth="2" /></Svg></button>
      </div>
      <div className="mt-[6px] flex h-[27px] shrink-0 items-center justify-between">
        <span className="whitespace-nowrap pb-px">选择要添加到报表的字段:</span>
        <button aria-label="工具" className="flex h-[27px] w-11 items-center justify-center gap-[9px] border border-[#ababab] bg-white">
          <Svg size={14} box={14}>
            <circle cx="7" cy="7" r="3.800" stroke="#999" strokeWidth="2.600" />
            <path d="M7 0.500v2M7 11.500v2M1.400 3.700l1.700 1M10.900 9.300l1.700 1M1.400 10.300l1.700-1M10.900 4.700l1.700-1" stroke="#999" strokeWidth="3" />
          </Svg>
          <Caret />
        </button>
      </div>
      <div className="mt-[14px] flex h-[22px] shrink-0 items-center border border-[#ababab] bg-white pr-[2px]">
        <input aria-label="搜索字段" placeholder="搜索" className="min-w-0 flex-1 pb-[2px] pl-[1px] placeholder:text-[#666]" />
        <button aria-label="搜索"><Svg size={13} box={13}><circle cx="8" cy="5" r="3.800" stroke="#416ea8" strokeWidth="1.500" /><path d="M5 8l-4 4" stroke="#416ea8" strokeWidth="2" /></Svg></button>
      </div>
      <div className="mt-[18px] min-h-0 flex-1 bg-[#fdfdfd] pl-[2px]">
        <ul>
          {fields.map(([name, on]) => (
            <li key={name} className="flex h-[21px] items-center gap-[6px] pb-[5px]">
              <Check id={`field-${name}`} checked={on} />
              <label htmlFor={`field-${name}`} className={on ? 'font-bold' : ''}>{name}</label>
            </li>
          ))}
        </ul>
        <a href="#more" className="mt-2 block leading-4">更多表格...</a>
      </div>
      <div className="mt-4 shrink-0 border-t border-dotted border-[#b5b5b5] pl-1 leading-[26px]">在以下区域间拖动字段:</div>
      <div className="-mr-px ml-[3px] mt-[13px] grid shrink-0 grid-cols-2">
        <section className="border-b border-r border-[#b0b0b0] pb-[5px] pr-[6px]">
          <h3 className="flex h-[23px] items-center gap-[7px] pb-[5px] pl-1">
            <Svg size={12} box={12}><path d="M0.500 0h11v2L7.500 6v6l-3-2V6l-4-4z" fill="#999" /></Svg>筛选器
          </h3>
          <div className="h-[109px] bg-[#fdfdfd]" />
        </section>
        <section className="border-b border-[#b0b0b0] pb-[5px] pl-[2px]">
          <h3 className="flex h-[23px] items-center gap-2 pb-[5px] pl-[5px]">
            <Svg size={10} box={10}><path d="M1 0v10M4 0v10M7 0v10M9.500 0v10" stroke="#999" strokeWidth="1.500" /></Svg>列
          </h3>
          <div className="h-[109px] bg-[#fdfdfd]" />
        </section>
        <section className="border-r border-[#b0b0b0] pr-[6px]">
          <h3 className="flex h-[30px] items-center gap-2 pl-[5px]">
            <Svg size={10} box={10}><path d="M0 1.500h10M0 5h10M0 8h10" stroke="#999" strokeWidth="2" /></Svg>行
          </h3>
          <div className="flow-root h-[109px] bg-[#fdfdfd]"><AreaSelect label="行" value="班级" className="border-[#ababab]" /></div>
        </section>
        <section className="pl-[2px]">
          <h3 className="flex h-[30px] items-center gap-2 pl-[5px]">
            <Svg size={10} box={10}><path d="M9 2.500V1H1l4 4-4 4h8V7.500" stroke="#888" strokeWidth="1.200" /></Svg>值
          </h3>
          <div className="flow-root h-[109px] bg-[#fdfdfd]"><AreaSelect label="值" value="求和项:总分" className="border-[#d6e6e0]" /></div>
        </section>
      </div>
      <div className="ml-[3px] flex h-[57px] shrink-0 items-center gap-[6px] pt-[10px]">
        <Check id="defer" checked={false} />
        <label htmlFor="defer">推迟布局更新</label>
      </div>
      <DragHints />
    </aside>
  )
}

// Red arrows from the ticked fields to their areas, plus the move cursor
function DragHints() {
  return (
    <svg width="261" height="779" viewBox="0 0 261 779" fill="none" className="pointer-events-none absolute left-0 top-0" aria-hidden="true">
      <g className="drop-shadow-[3px_2px_2px_rgba(0,0,0,0.45)]">
        <path d="M93 135L59.500 546" stroke="#e01010" strokeWidth="3.500" strokeLinecap="round" />
        <path d="M57.500 573l-4-28 6 2 6-1z" fill="#f00808" stroke="#e01010" />
        <path d="M64 303Q98 390 168 573" stroke="#e01010" strokeWidth="3.500" strokeLinecap="round" />
        <path d="M177 593l-15-21 7-1 6-6z" fill="#f00808" stroke="#e01010" />
      </g>
      <path d="M208 630v16M200 638h16" stroke="#000" strokeWidth="1.200" strokeDasharray="6 4" />
      <path d="M208 629l-3 4h6zM199 638l4-3v6zM217 638l-4-3v6z" fill="#000" />
      <path d="M208 638v15l3-3 3 7 3-1-3-7h5z" fill="#fff" stroke="#000" />
    </svg>
  )
}

/* ---------- status bar ---------- */

function StatusBar() {
  return (
    <footer className="flex h-[19px] shrink-0 items-center border-t border-[#c6c6c6] bg-[#f0f0f0] pl-[7px] text-xs text-[#444]">
      <span>就绪</span>
      <span className="ml-[19px]">数字</span>
      <span className="ml-4">
        <Svg size={14} box={14}><circle cx="3" cy="3" r="3" fill="#777" /><path d="M7 1h6v3H7z" fill="#777" /><path d="M1.500 7v6.500h11V4M3 8h1M6 8h1M9 8h1M3 11h1M6 11h1M9 11h1" stroke="#777" strokeWidth="1.300" /></Svg>
      </span>
      <div className="ml-auto flex h-full items-center pr-[22px]">
        <button aria-label="普通" className="flex h-full w-[38px] items-center justify-center bg-[#c6c6c6]"><Svg size={14} box={14}><path d="M0.500 1.500h13v11H0.500zM0 5.500h14M0 9.500h14M4.500 1v12M9.500 1v12" stroke="#555" /></Svg></button>
        <button aria-label="页面布局" className="flex h-full w-[38px] items-center justify-center"><Svg size={14} box={14}><path d="M0.500 0.500h13v13H0.500zM3.500 2.500h7v9h-7zM5 5.500h4M5 7.500h4M5 9.500h4" stroke="#666" /></Svg></button>
        <button aria-label="分页预览" className="flex h-full w-[38px] items-center justify-center"><Svg size={14} box={14}><path d="M0.500 1.500h13v11H0.500zM4.500 1v6.500h5V1" stroke="#666" /></Svg></button>
        <button aria-label="缩小" className="ml-1 w-3"><Svg size={8} box={8}><path d="M1 4h6" stroke="#555" strokeWidth="2" /></Svg></button>
        <input aria-label="缩放" type="range" min="10" max="170" defaultValue="80" className="h-[13px] w-[102px] appearance-none bg-transparent bg-[linear-gradient(#aaa,#aaa)] bg-[length:100%_1px] bg-center bg-no-repeat [&::-webkit-slider-thumb]:h-[11px] [&::-webkit-slider-thumb]:w-1 [&::-webkit-slider-thumb]:appearance-none [&::-webkit-slider-thumb]:bg-[#555]" />
        <button aria-label="放大" className="ml-[3px]"><Svg size={8} box={8}><path d="M0 4h8M4 0v8" stroke="#555" strokeWidth="2" /></Svg></button>
        <span className="ml-[14px]">90%</span>
      </div>
    </footer>
  )
}

function Watermark() {
  return (
    <div className="pointer-events-none absolute bottom-[6px] right-[11px] flex items-end gap-[5px]">
      <svg width="78" height="50" viewBox="0 0 78 50" fill="none" aria-hidden="true" className="shrink-0">
        <path d="M0 38L26 16 14 4h14l8 8L58 0 42 18l8 14H36l-6-8z" fill="#fff" opacity="0.350" />
        <path d="M73 8C54 6 39 20 39 31c0 4 3 6 8 6-4-9 6-23 26-29z" fill="#6aaade" opacity="0.850" />
        <path d="M75 12c-14 2-22 8-24 16 6-6 13-9 21-8-3-2-2-5 3-8z" fill="#86bfe6" opacity="0.850" />
        <path d="M50 29c6-5 13-5 16-1-4 1-5 9-13 10-6 0-7-5-3-9z" fill="#62a6dc" opacity="0.700" />
        <path d="M69 24c9 6 7 20-20 24 12-5 18-14 14-20z" fill="#74c76e" opacity="0.850" />
        <path d="M45 45c8-1 14-4 18-9 1 7-6 12-18 12z" fill="#dcdf7a" opacity="0.850" />
      </svg>
      <div className="flex flex-col opacity-80">
        <span className="bg-[linear-gradient(white,white)] bg-[length:34px_24px] bg-[position:62px_0px] bg-no-repeat text-[21px] font-bold leading-6 text-[#6aa8dc]">极光下载站</span>
        <span className="font-['Liberation_Sans',sans-serif] text-[17px] leading-5 text-[#4dbb6c]">www.xz7.com</span>
      </div>
    </div>
  )
}

export default function App() {
  return (
    <div className="relative flex h-screen overflow-hidden bg-[#cdd4d0] font-['Noto_Sans_CJK_SC',sans-serif]">
      <div className="ml-[2px] flex min-w-0 flex-1 flex-col border-x border-[#3c7558] bg-[#e6e6e6]">
        <TitleBar />
        <Ribbon />
        <QuickBar />
        <FormulaBar />
        <main className="flex min-h-0 flex-1">
          <div className="flex min-w-0 flex-1 flex-col">
            <div className="flex min-h-0 flex-1">
              <Sheet />
              <div className="mt-[19px] w-px bg-[#8a8a8a]" />
              <VerticalScroll />
            </div>
            <SheetTabs />
          </div>
          <FieldPane />
        </main>
        <StatusBar />
      </div>
      <div className="flex w-1 shrink-0 flex-col justify-center pt-[78px]">
        <div className="h-[152px] w-[3px] bg-[#7e8c86]" />
      </div>
      <Watermark />
    </div>
  )
}
